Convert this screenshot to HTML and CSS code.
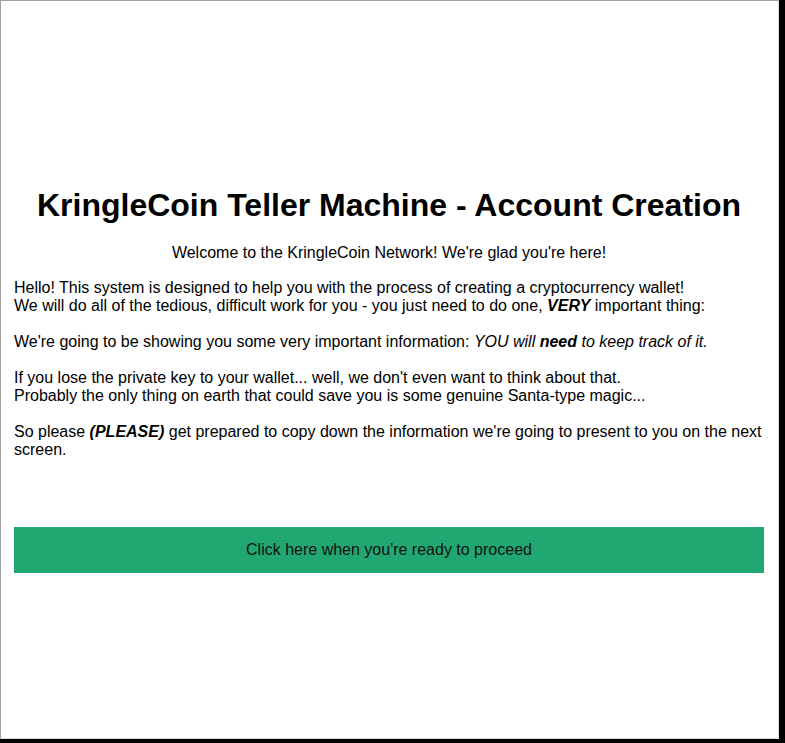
FILE: index.html
```html
<!DOCTYPE html>
<html>
<head>
<meta charset="utf-8">
<title>KringleCoin Teller Machine</title>
<link rel="stylesheet" href="styles.css">
</head>
<body>
<div class="window">
  <main class="content">
    <h1 class="title">KringleCoin Teller Machine - Account Creation</h1>
    <p class="welcome">Welcome to the KringleCoin Network! We're glad you're here!</p>
    <p class="para">Hello! This system is designed to help you with the process of creating a cryptocurrency wallet!<br>We will do all of the tedious, difficult work for you - you just need to do one, <b><i>VERY</i></b> important thing:</p>
    <p class="para">We're going to be showing you some very important information: <i>YOU will <b>need</b> to keep track of it.</i></p>
    <p class="para">If you lose the private key to your wallet... well, we don't even want to think about that.<br>Probably the only thing on earth that could save you is some genuine Santa-type magic...</p>
    <p class="para">So please <b><i>(PLEASE)</i></b> get prepared to copy down the information we're going to present to you on the next screen.</p>
    <div class="proceed">Click here when you're ready to proceed</div>
  </main>
</div>
</body>
</html>
```

FILE: styles.css
```css
html, body {
  margin: 0;
  padding: 0;
  background: #000;
}

body {
  font-family: "Liberation Sans", Arial, sans-serif;
  font-size: 16px;
  line-height: 18px;
  color: #000;
}

.window {
  box-sizing: border-box;
  width: 779px;
  height: 739px;
  background: #fff;
  border-top: 1px solid #a0a0a0;
  border-left: 1px solid #a0a0a0;
  border-right: 1px solid #dcdcdc;
  border-bottom: 1px solid #dcdcdc;
}

.content {
  padding: 186px 14px 0 13px;
  display: flex;
  flex-direction: column;
}

.title {
  margin: 0 0 20px;
  font-size: 32px;
  line-height: 37px;
  font-weight: bold;
  text-align: center;
}

.welcome {
  margin: 0 0 17px;
  text-align: center;
}

.para {
  margin: 0 0 18px;
}

.proceed {
  margin-top: 50px;
  background: #21a872;
  color: #111;
  text-align: center;
  padding: 14px 0;
  cursor: pointer;
}
```
